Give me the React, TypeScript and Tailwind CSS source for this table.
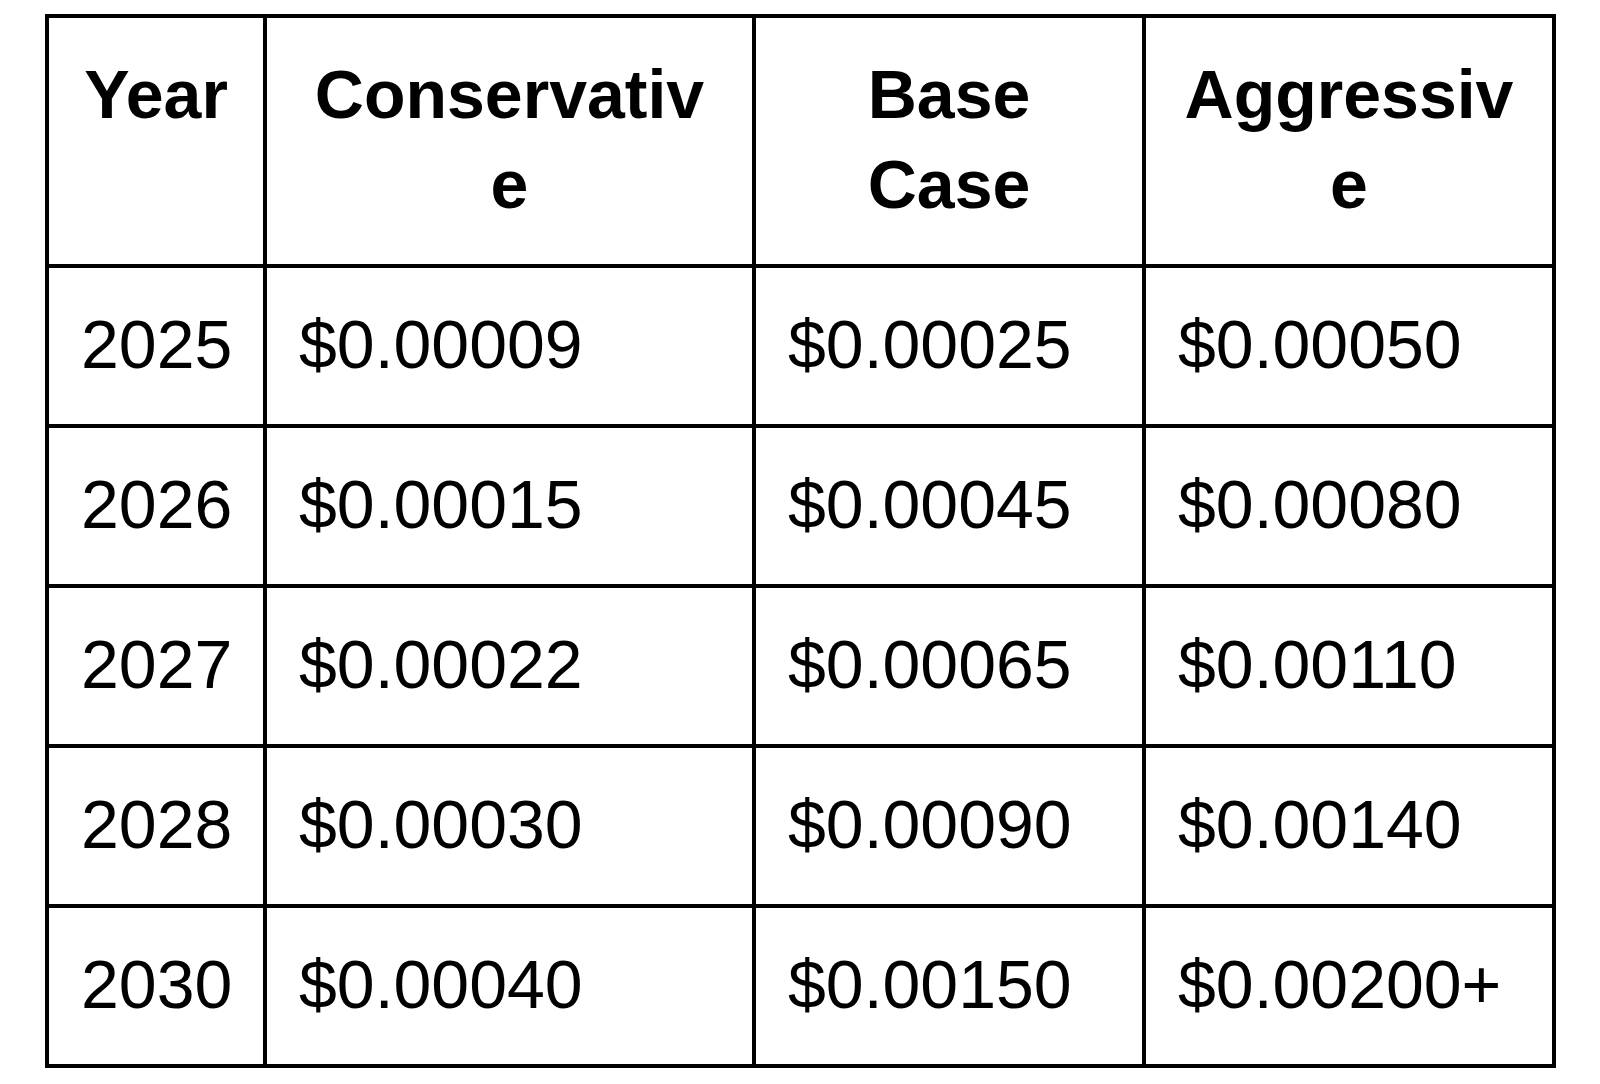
const HEADERS: string[][] = [
  ['Year'],
  ['Conservativ', 'e'],
  ['Base', 'Case'],
  ['Aggressiv', 'e'],
];

const ROWS: string[][] = [
  ['2025', '$0.00009', '$0.00025', '$0.00050'],
  ['2026', '$0.00015', '$0.00045', '$0.00080'],
  ['2027', '$0.00022', '$0.00065', '$0.00110'],
  ['2028', '$0.00030', '$0.00090', '$0.00140'],
  ['2030', '$0.00040', '$0.00150', '$0.00200+'],
];

export default function App() {
  return (
    <div
      className="min-h-screen bg-white pl-[45px] pt-[14px] text-black"
      style={{ fontFamily: '"Liberation Sans", Arial, sans-serif' }}
    >
      <div className="grid w-max grid-cols-[218px_489px_390px_410px] border-l-4 border-t-4 border-black">
        {/* header */}
        {HEADERS.map((lines, i) => (
          <div
            key={i}
            className="h-[250px] border-r-4 border-b-4 border-black px-[30px] pt-[31px] text-center text-[68px] font-bold leading-[90px] whitespace-nowrap"
          >
            {lines.map((l, j) => (
              <div key={j}>{l}</div>
            ))}
          </div>
        ))}

        {/* rows */}
        {ROWS.map((row, r) =>
          row.map((cell, c) => (
            <div
              key={`${r}-${c}`}
              className="h-[160px] border-r-4 border-b-4 border-black pl-[32px] pr-[20px] pt-[31px] text-[68px] leading-[90px] whitespace-nowrap"
            >
              {cell}
            </div>
          ))
        )}
      </div>
    </div>
  );
}
